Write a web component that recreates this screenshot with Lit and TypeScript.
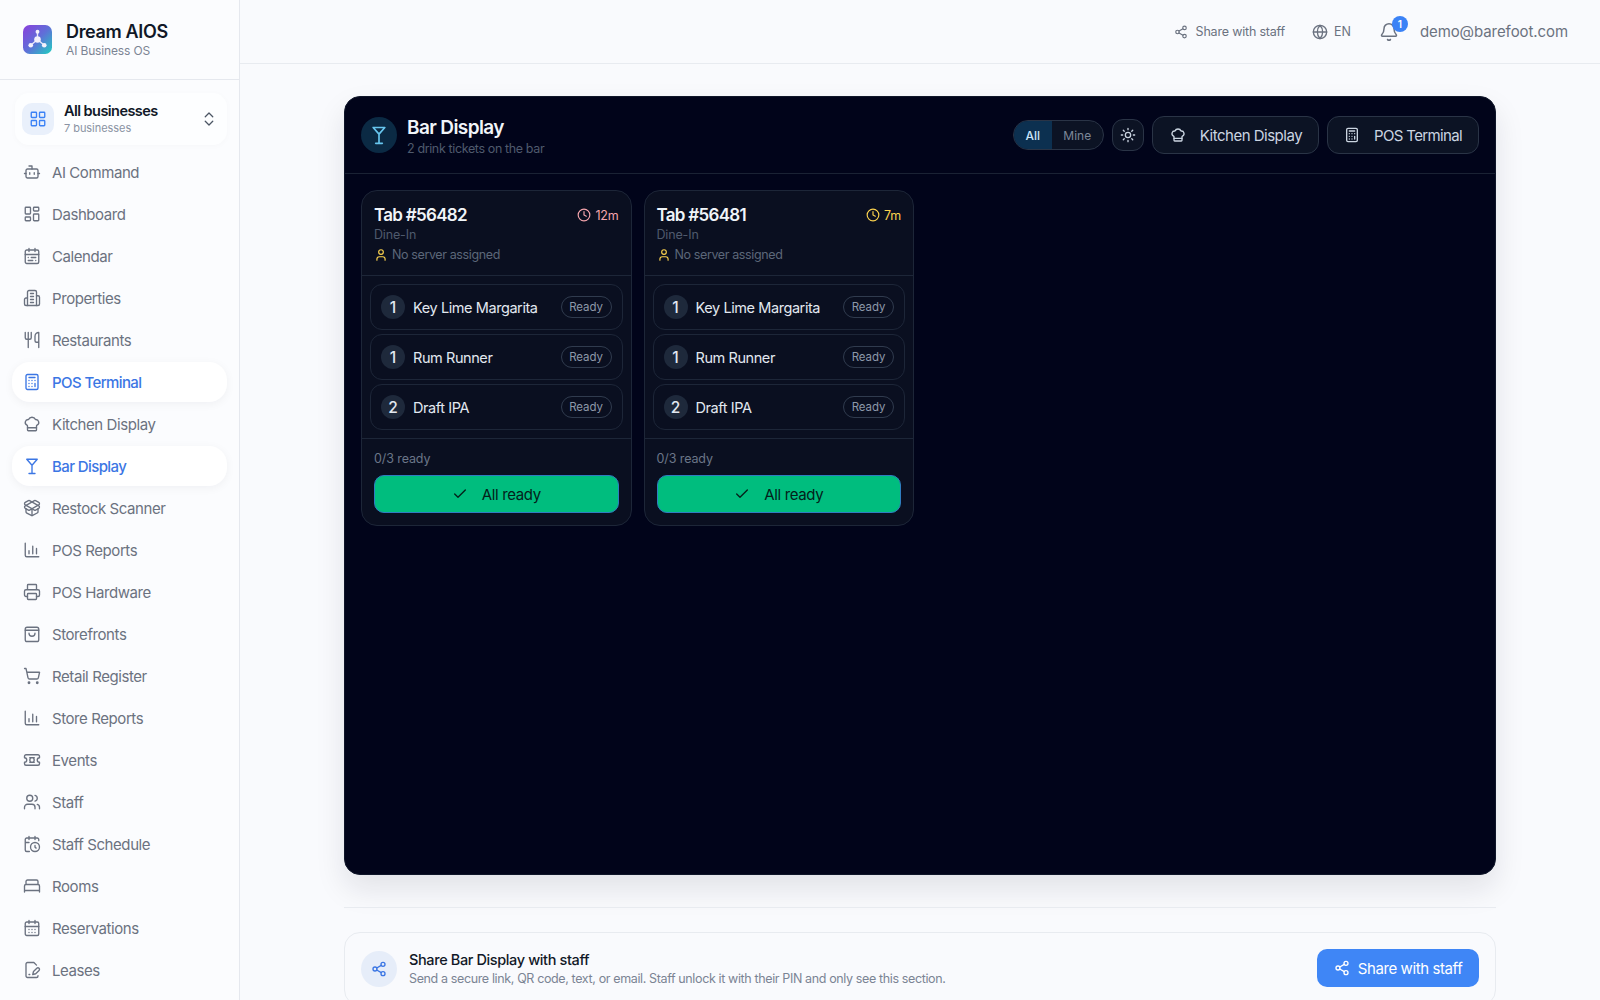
import { LitElement, html, css, svg } from "lit";
import { customElement } from "lit/decorators.js";

const I: Record<string, any> = {
  bot: svg`<path d="M12 8V4H8"/><rect x="4" y="8" width="16" height="12" rx="2"/><path d="M2 14h2M20 14h2M15 13v2M9 13v2"/>`,
  dash: svg`<rect x="3" y="3" width="7" height="9" rx="1"/><rect x="14" y="3" width="7" height="5" rx="1"/><rect x="14" y="12" width="7" height="9" rx="1"/><rect x="3" y="16" width="7" height="5" rx="1"/>`,
  calr: svg`<rect x="3" y="4" width="18" height="18" rx="2"/><path d="M16 2v4M3 10h18M8 2v4M17 14h-6M13 18H7M7 14h.01M17 18h.01"/>`,
  bld: svg`<path d="M6 22V4a2 2 0 0 1 2-2h8a2 2 0 0 1 2 2v18Z"/><path d="M6 12H4a2 2 0 0 0-2 2v6a2 2 0 0 0 2 2h2M18 9h2a2 2 0 0 1 2 2v9a2 2 0 0 1-2 2h-2M10 6h4M10 10h4M10 14h4M10 18h4"/>`,
  ute: svg`<path d="M3 2v7c0 1.1.9 2 2 2h4a2 2 0 0 0 2-2V2M7 2v20M21 15V2a5 5 0 0 0-5 5v6c0 1.1.9 2 2 2h3Zm0 0v7"/>`,
  calc: svg`<rect x="4" y="2" width="16" height="20" rx="2"/><path d="M8 6h8M16 14v4M16 10h.01M12 10h.01M8 10h.01M12 14h.01M8 14h.01M12 18h.01M8 18h.01"/>`,
  chef: svg`<path d="M17 21a1 1 0 0 0 1-1v-5.35c0-.457.316-.844.727-1.041a4 4 0 0 0-2.134-7.589 5 5 0 0 0-9.186 0 4 4 0 0 0-2.134 7.588c.411.198.727.585.727 1.041V20a1 1 0 0 0 1 1Z"/><path d="M6 17h12"/>`,
  mart: svg`<path d="M8 22h8M12 11v11M19 3l-7 8-7-8Z"/>`,
  pack: svg`<path d="M12 22v-9M15.17 2.21a1.67 1.67 0 0 1 1.63 0L21 4.57a1.93 1.93 0 0 1 0 3.36L8.82 14.79a1.655 1.655 0 0 1-1.64 0L3 12.43a1.93 1.93 0 0 1 0-3.36z"/><path d="M20 13v3.87a2.06 2.06 0 0 1-1.11 1.83l-6 3.08a1.93 1.93 0 0 1-1.78 0l-6-3.08A2.06 2.06 0 0 1 4 16.87V13"/><path d="M21 12.43a1.93 1.93 0 0 0 0-3.36L8.83 2.2a1.64 1.64 0 0 0-1.63 0L3 4.57a1.93 1.93 0 0 0 0 3.36l12.18 6.86a1.636 1.636 0 0 0 1.63 0z"/>`,
  bars: svg`<path d="M3 3v16a2 2 0 0 0 2 2h16M8 17v-4M13 17V7M18 17v-7"/>`,
  prn: svg`<path d="M6 18H4a2 2 0 0 1-2-2v-5a2 2 0 0 1 2-2h16a2 2 0 0 1 2 2v5a2 2 0 0 1-2 2h-2M6 9V3a1 1 0 0 1 1-1h10a1 1 0 0 1 1 1v6"/><rect x="6" y="14" width="12" height="8" rx="1"/>`,
  bag: svg`<rect x="3" y="3" width="18" height="19" rx="2.5"/><path d="M3 7h18M16 11a4 4 0 0 1-8 0"/>`,
  cart: svg`<circle cx="8" cy="21" r="1"/><circle cx="19" cy="21" r="1"/><path d="M2.05 2.05h2l2.66 12.42a2 2 0 0 0 2 1.58h9.78a2 2 0 0 0 1.95-1.57l1.65-7.43H5.12"/>`,
  tick: svg`<path d="M2 9a3 3 0 0 1 0 6v2a2 2 0 0 0 2 2h16a2 2 0 0 0 2-2v-2a3 3 0 0 1 0-6V7a2 2 0 0 0-2-2H4a2 2 0 0 0-2 2Z"/><path d="M9 9h6M9 15h6M10 9l-1 3 1 3M14 9l1 3-1 3"/>`,
  users: svg`<path d="M16 21v-2a4 4 0 0 0-4-4H6a4 4 0 0 0-4 4v2"/><circle cx="9" cy="7" r="4"/><path d="M22 21v-2a4 4 0 0 0-3-3.87M16 3.13a4 4 0 0 1 0 7.75"/>`,
  calc2: svg`<path d="M21 7.5V6a2 2 0 0 0-2-2H5a2 2 0 0 0-2 2v14a2 2 0 0 0 2 2h3.5M16 2v4M8 2v4M3 10h5M17.5 17.5 16 16.3V14"/><circle cx="16" cy="16" r="6"/>`,
  bed: svg`<path d="M2 20v-8a2 2 0 0 1 2-2h16a2 2 0 0 1 2 2v8M4 10V6a2 2 0 0 1 2-2h12a2 2 0 0 1 2 2v4M2 18h20"/>`,
  cald: svg`<rect x="3" y="4" width="18" height="18" rx="2"/><path d="M8 2v4M16 2v4M3 10h18M8 14h.01M12 14h.01M16 14h.01M8 18h.01M12 18h.01M16 18h.01"/>`,
  file: svg`<path d="M20 19.5v.5a2 2 0 0 1-2 2H6a2 2 0 0 1-2-2V4a2 2 0 0 1 2-2h8.5L18 5.5M8 18h1M18.42 9.61a2.1 2.1 0 1 1 2.97 2.97L16.95 17 13 18l.99-3.95 4.43-4.44Z"/>`,
  share: svg`<circle cx="18" cy="5" r="3"/><circle cx="6" cy="12" r="3"/><circle cx="18" cy="19" r="3"/><path d="M8.59 13.51l6.83 3.98M15.41 6.51l-6.82 3.98"/>`,
  globe: svg`<circle cx="12" cy="12" r="10"/><path d="M12 2a14.5 14.5 0 0 0 0 20 14.5 14.5 0 0 0 0-20M2 12h20"/>`,
  bell: svg`<path d="M10.268 21a2 2 0 0 0 3.464 0M3.262 15.326A1 1 0 0 0 4 17h16a1 1 0 0 0 .74-1.673C19.41 13.956 18 12.499 18 8A6 6 0 0 0 6 8c0 4.499-1.411 5.956-2.738 7.326"/>`,
  ud: svg`<path d="m7 15 5 5 5-5M7 9l5-5 5 5"/>`,
  sun: svg`<circle cx="12" cy="12" r="4"/><path d="M12 2v2M12 20v2M4.93 4.93l1.41 1.41M17.66 17.66l1.41 1.41M2 12h2M20 12h2M6.34 17.66l-1.41 1.41M19.07 4.93l-1.41 1.41"/>`,
  clock: svg`<circle cx="12" cy="12" r="10"/><path d="M12 6v6l4 2"/>`,
  user: svg`<path d="M19 21v-2a4 4 0 0 0-4-4H9a4 4 0 0 0-4 4v2"/><circle cx="12" cy="7" r="4"/>`,
  check: svg`<path d="M20 6 9 17l-5-5"/>`,
  grid: svg`<rect x="3" y="3" width="7" height="7" rx="1"/><rect x="14" y="3" width="7" height="7" rx="1"/><rect x="14" y="14" width="7" height="7" rx="1"/><rect x="3" y="14" width="7" height="7" rx="1"/>`,
};

const icon = (n: string, cls = "") =>
  html`<svg class="ic ${cls}" viewBox="0 0 24 24" fill="none" stroke="currentColor" stroke-width="2" stroke-linecap="round" stroke-linejoin="round">${I[n]}</svg>`;

const NAV: [string, string, boolean?][] = [
  ["bot", "AI Command"], ["dash", "Dashboard"], ["calr", "Calendar"], ["bld", "Properties"],
  ["ute", "Restaurants"], ["calc", "POS Terminal", true], ["chef", "Kitchen Display"], ["mart", "Bar Display", true],
  ["pack", "Restock Scanner"], ["bars", "POS Reports"], ["prn", "POS Hardware"], ["bag", "Storefronts"],
  ["cart", "Retail Register"], ["bars", "Store Reports"], ["tick", "Events"], ["users", "Staff"],
  ["calc2", "Staff Schedule"], ["bed", "Rooms"], ["cald", "Reservations"], ["file", "Leases"],
];

const TICKETS = [
  { tab: "Tab #56482", age: "12m", late: true },
  { tab: "Tab #56481", age: "7m", late: false },
];
const ITEMS: [number, string][] = [[1, "Key Lime Margarita"], [1, "Rum Runner"], [2, "Draft IPA"]];

@customElement("app-root")
export class AppRoot extends LitElement {
  static styles = css`
    :host { display: block; font-family: Inter, "Open Sans", sans-serif; }
    * { box-sizing: border-box; }
    .ic { width: 16px; height: 16px; flex: none; display: block; }
    .app { display: grid; grid-template-columns: 240px 1fr; height: 1000px; overflow: hidden; background: #f9fafd; }

    .side { background: #fbfcfe; border-right: 1px solid #e5e8ee; overflow: hidden; display: flex; flex-direction: column; }
    .brand { height: 80px; flex: none; border-bottom: 1px solid #e5e8ee; display: flex; align-items: center; padding: 0 0 0 23px; gap: 14px; }
    .brand-t { font-size: 18px; font-weight: 600; color: #111827; letter-spacing: -0.35px; line-height: 22px; }
    .brand-s { font-size: 12px; color: #7b8494; line-height: 16px; letter-spacing: -0.15px; }
    .switch { margin: 13px 12px 0 15px; height: 52px; flex: none; border-radius: 14px; background: #fdfeff; display: flex; align-items: center; padding: 0 9px 0 7px; box-shadow: 0 1px 6px rgba(15,23,42,.025); }
    .switch-i { width: 32px; height: 32px; border-radius: 10px; background: #e9f0fb; color: #3b82f6; display: flex; align-items: center; justify-content: center; margin-right: 10px; }
    .switch-i .ic { width: 18px; height: 18px; stroke-width: 1.8; }
    .switch-t { flex: 1; margin-top: -1px; }
    .switch-n { font-size: 14.5px; font-weight: 600; color: #111827; line-height: 18px; letter-spacing: -0.55px; }
    .switch-c { font-size: 11px; color: #8a93a3; line-height: 14px; margin-top: 1px; letter-spacing: -0.05px; }
    .switch .ud { color: #4b5563; width: 18px; height: 18px; stroke-width: 1.7; }
    .nav { margin-top: 7px; padding: 0 12px; display: flex; flex-direction: column; gap: 2px; }
    .item { height: 40px; flex: none; border-radius: 18px; display: flex; align-items: center; gap: 11px; padding: 0 11px; font-size: 15px; color: #6b7280; letter-spacing: -0.42px; }
    .item .ic { width: 18px; height: 18px; stroke-width: 1.8; }
    .item.on { background: #fff; color: #3b76e4; font-weight: 500; letter-spacing: -0.6px; box-shadow: 0 2px 10px rgba(15,23,42,.05); }

    .main { display: flex; flex-direction: column; min-width: 0; overflow: hidden; }
    .top { height: 64px; flex: none; border-bottom: 1px solid #e8ebf0; display: flex; align-items: center; justify-content: flex-end; padding: 0 32px 0 0; color: #6b7280; }
    .top-share { display: flex; align-items: center; gap: 8px; font-size: 12.5px; letter-spacing: -0.2px; margin-right: 27px; }
    .top-share .ic { width: 14px; height: 14px; }
    .top-lang { display: flex; align-items: center; gap: 6px; font-size: 12.5px; margin-right: 28px; }
    .bell { position: relative; margin-right: 21px; color: #6b7280; }
    .bell .ic { width: 20px; height: 20px; stroke-width: 1.8; }
    .badge { position: absolute; top: -6px; right: -9px; width: 16px; height: 16px; border-radius: 50%; background: #3b82f6; color: #fff; font-size: 10px; font-weight: 600; display: flex; align-items: center; justify-content: center; }
    .mail { font-size: 15px; letter-spacing: -0.08px; }

    .content { width: 1152px; margin: 32px auto 0; flex: none; }
    .board { height: 779px; background: #01041a; border-radius: 16px; border: 1px solid #0f1629; box-shadow: 0 14px 30px rgba(15,23,42,.1); display: flex; flex-direction: column; overflow: hidden; }
    .bhead { height: 77px; flex: none; border-bottom: 1px solid #1a2234; display: flex; align-items: center; padding: 0 16px; }
    .bicon { width: 36px; height: 36px; border-radius: 50%; background: #0b2a44; color: #67c6ee; display: flex; align-items: center; justify-content: center; margin-right: 10px; }
    .bicon .ic { width: 20px; height: 20px; }
    .bt { flex: 1; padding-top: 2px; }
    .bt-n { font-size: 19px; font-weight: 600; color: #f1f5f9; line-height: 24px; letter-spacing: -0.6px; }
    .bt-s { font-size: 12.5px; color: #4f5a6d; line-height: 16px; letter-spacing: -0.37px; margin-top: 1px; }
    .seg { display: flex; height: 30px; width: 91px; border: 1px solid #2a3446; border-radius: 15px; overflow: hidden; font-size: 12px; background: #0c1324; margin-right: 8px; }
    .seg div { display: flex; align-items: center; justify-content: center; }
    .seg .a { width: 38px; background: #0c3050; color: #c9e6fa; font-weight: 500; }
    .seg .b { flex: 1; color: #7d8798; }
    .sun { width: 32px; height: 32px; border: 1px solid #2a3446; border-radius: 11px; background: #0c1324; color: #cbd5e1; display: flex; align-items: center; justify-content: center; margin-right: 8px; }
    .hbtn { height: 38px; border: 1px solid #2a3446; border-radius: 12px; background: #0c1324; color: #cbd5e1; display: flex; align-items: center; font-size: 15px; letter-spacing: -0.5px; padding: 0 16px 0 17px; gap: 14px; }
    .hbtn + .hbtn { margin-left: 8px; padding-left: 16px; letter-spacing: -0.65px; }

    .grid { display: grid; grid-template-columns: repeat(4, 1fr); gap: 12px; padding: 16px; align-items: start; }
    .t { border: 1px solid #1d2638; border-radius: 16px; background: #0a0f20; }
    .t-h { height: 85px; border-bottom: 1px solid #1d2638; padding: 12px 12px 0; }
    .t-row { display: flex; justify-content: space-between; }
    .t-n { font-size: 17px; font-weight: 600; color: #f1f5f9; line-height: 24px; letter-spacing: -0.7px; }
    .t-a { display: flex; align-items: center; gap: 4px; font-size: 12.5px; height: 16px; margin-top: 4px; letter-spacing: -0.2px; }
    .t-a .ic { width: 14px; height: 14px; }
    .late { color: #f6a5ad; }
    .warn { color: #fbd24e; }
    .t-s { font-size: 12.5px; color: #4f5a6d; line-height: 16px; letter-spacing: -0.15px; }
    .t-u { display: flex; align-items: center; gap: 4px; font-size: 12.5px; color: #5c6779; line-height: 16px; margin-top: 4px; letter-spacing: -0.38px; }
    .t-u .ic { width: 14px; height: 14px; color: #fbd24e; }
    .rows { padding: 8px 8px; display: flex; flex-direction: column; gap: 4px; height: 163px; border-bottom: 1px solid #1d2638; }
    .r { height: 46px; flex: none; border: 1px solid #1d2638; border-radius: 12px; display: flex; align-items: center; padding: 0 10px; }
    .q { width: 24px; height: 24px; border-radius: 50%; background: #1e293b; color: #e2e8f0; font-size: 15.5px; font-weight: 500; display: flex; align-items: center; justify-content: center; margin-right: 8px; }
    .r-n { flex: 1; font-size: 14.5px; color: #e2e8f0; letter-spacing: -0.42px; }
    .pill { width: 51px; height: 22px; border: 1px solid #303b4e; border-radius: 11px; font-size: 11.5px; color: #8d98a9; display: flex; align-items: center; justify-content: center; letter-spacing: -0.1px; }
    .f { padding: 12px; height: 86px; }
    .f-l { font-size: 12.5px; color: #6b7688; line-height: 16px; margin-bottom: 8px; letter-spacing: -0.1px; }
    .go { height: 38px; border-radius: 10px; border: 1px solid #2f7dc0; background: #00bd7e; color: #04211a; font-size: 15px; letter-spacing: -0.35px; display: flex; align-items: center; justify-content: center; gap: 14px; }

    .rule { height: 1px; background: #e8ebf0; margin: 32px 0 24px; }
    .sharecard { height: 74px; border: 1px solid #e8ebf0; border-radius: 16px; display: flex; align-items: center; padding: 0 16px; background: #f9fafd; }
    .s-i { width: 36px; height: 36px; border-radius: 50%; background: #e6edf9; color: #3b76e4; display: flex; align-items: center; justify-content: center; margin-right: 12px; }
    .s-t { flex: 1; }
    .s-n { font-size: 14.5px; font-weight: 500; color: #111827; line-height: 18px; letter-spacing: -0.38px; margin: -1px 0 1px; }
    .s-d { font-size: 12.5px; color: #7b8494; line-height: 17px; letter-spacing: -0.37px; }
    .s-b { height: 38px; width: 162px; border-radius: 10px; background: #3f86f6; color: #fff; display: flex; align-items: center; justify-content: center; gap: 8px; font-size: 15px; letter-spacing: -0.4px; margin-bottom: 2px; }
  `;

  render() {
    return html`<div class="app">
      <aside class="side">
        <div class="brand">
          <svg width="29" height="29" viewBox="0 0 30 30">
            <defs><linearGradient id="lg" x1="0" y1="0" x2="1" y2="1"><stop offset="0" stop-color="#8b3fdc"/><stop offset=".5" stop-color="#5f6fd8"/><stop offset="1" stop-color="#1fd0c0"/></linearGradient></defs>
            <rect width="30" height="30" rx="7" fill="url(#lg)"/>
            <path d="M15 7v8M15 15l-7 6M15 15l7 6" stroke="#e8e6f8" stroke-width="1.4"/>
            <circle cx="15" cy="7" r="2" fill="#f3f1fc"/><circle cx="15" cy="15" r="3.4" fill="#f3f1fc"/><circle cx="8" cy="21" r="2.4" fill="#f3f1fc"/><circle cx="22" cy="21" r="2.4" fill="#f3f1fc"/>
          </svg>
          <div><div class="brand-t">Dream AIOS</div><div class="brand-s">AI Business OS</div></div>
        </div>
        <div class="switch">
          <div class="switch-i">${icon("grid")}</div>
          <div class="switch-t"><div class="switch-n">All businesses</div><div class="switch-c">7 businesses</div></div>
          ${icon("ud", "ud")}
        </div>
        <nav class="nav">
          ${NAV.map(([i, t, on]) => html`<div class="item ${on ? "on" : ""}">${icon(i)}<span>${t}</span></div>`)}
        </nav>
      </aside>
      <main class="main">
        <header class="top">
          <div class="top-share">${icon("share")}<span>Share with staff</span></div>
          <div class="top-lang">${icon("globe")}<span>EN</span></div>
          <div class="bell">${icon("bell")}<span class="badge">1</span></div>
          <div class="mail">demo@barefoot.com</div>
        </header>
        <div class="content">
          <section class="board">
            <div class="bhead">
              <div class="bicon">${icon("mart")}</div>
              <div class="bt"><div class="bt-n">Bar Display</div><div class="bt-s">2 drink tickets on the bar</div></div>
              <div class="seg"><div class="a">All</div><div class="b">Mine</div></div>
              <div class="sun">${icon("sun")}</div>
              <div class="hbtn">${icon("chef")}<span>Kitchen Display</span></div>
              <div class="hbtn">${icon("calc")}<span>POS Terminal</span></div>
            </div>
            <div class="grid">
              ${TICKETS.map((k) => html`<article class="t">
                <div class="t-h">
                  <div class="t-row"><div class="t-n">${k.tab}</div><div class="t-a ${k.late ? "late" : "warn"}">${icon("clock")}<span>${k.age}</span></div></div>
                  <div class="t-s">Dine-In</div>
                  <div class="t-u">${icon("user")}<span>No server assigned</span></div>
                </div>
                <div class="rows">
                  ${ITEMS.map(([q, n]) => html`<div class="r"><div class="q">${q}</div><div class="r-n">${n}</div><div class="pill">Ready</div></div>`)}
                </div>
                <div class="f">
                  <div class="f-l">0/3 ready</div>
                  <div class="go">${icon("check")}<span>All ready</span></div>
                </div>
              </article>`)}
            </div>
          </section>
          <div class="rule"></div>
          <section class="sharecard">
            <div class="s-i">${icon("share")}</div>
            <div class="s-t"><div class="s-n">Share Bar Display with staff</div><div class="s-d">Send a secure link, QR code, text, or email. Staff unlock it with their PIN and only see this section.</div></div>
            <div class="s-b">${icon("share")}<span>Share with staff</span></div>
          </section>
        </div>
      </main>
    </div>`;
  }
}
